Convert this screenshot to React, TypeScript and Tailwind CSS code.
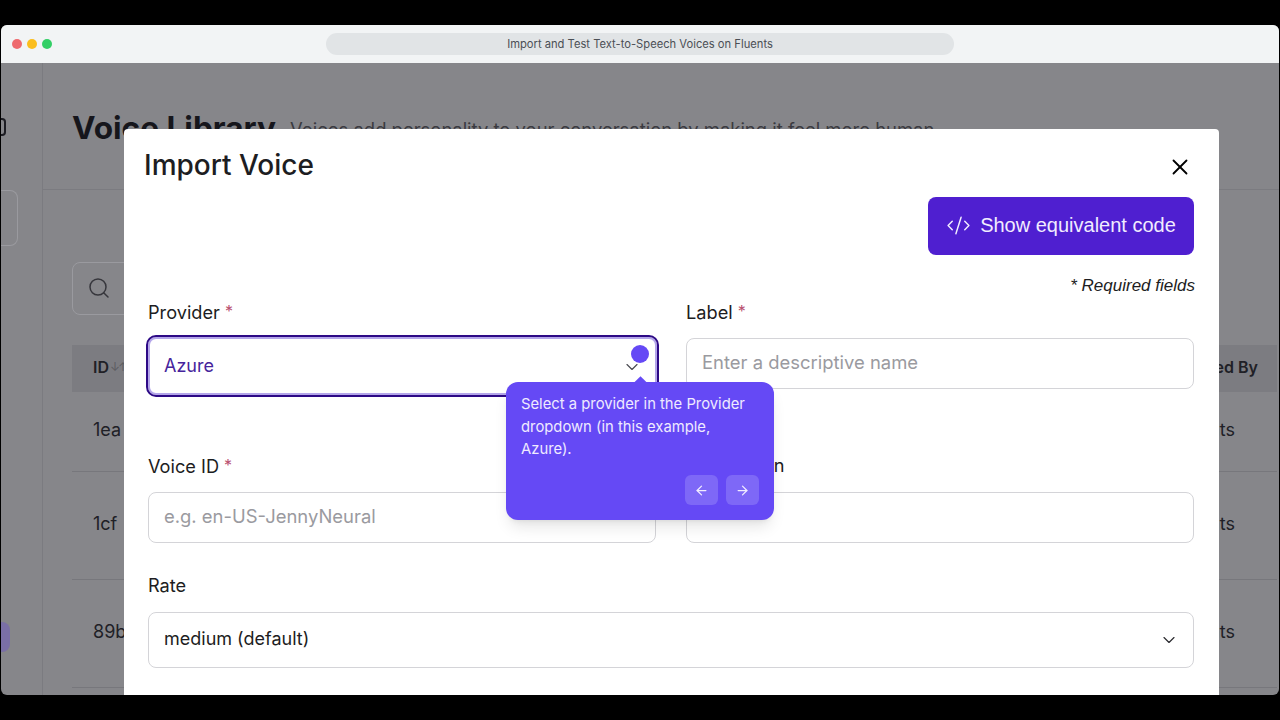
import { ArrowLeft, ArrowRight, ChevronDown, CodeXml, Search, X } from "lucide-react";

const font = "font-['Inter','Liberation_Sans',sans-serif]";

function Label({ text, required }: { text: string; required?: boolean }) {
  return (
    <div className="h-[26px] text-[18.2px] leading-[27px] text-[#1d1d22]">
      {text}
      {required && <span className="ml-[5px] align-[2px] text-[16px] text-[#b9506f]">*</span>}
    </div>
  );
}

function TextInput({ placeholder }: { placeholder?: string }) {
  return (
    <div className="mt-[14px] flex h-[51px] items-center rounded-lg border-[1.5px] border-[#d4d4d8] pb-[2px] pl-[15px] pr-[14px] text-[18.45px] text-[#9a9aa0]">
      {placeholder}
    </div>
  );
}

function Row({ id, height }: { id: string; height: string }) {
  return (
    <div className={`flex items-center justify-between border-b border-[#77777c] pb-[4px] pl-[21px] pr-[42px] text-[18px] text-[#202026] ${height}`}>
      <span>{id}</span>
      <span>Fluents</span>
    </div>
  );
}

export default function App() {
  return (
    <div className={`flex h-[720px] w-[1280px] flex-col overflow-hidden bg-black pt-[25px] ${font}`}>
      <div className="relative mx-px h-[670px] overflow-hidden rounded-md bg-[#86868a]">
        {/* browser bar */}
        <div className="relative flex h-[38px] items-center justify-center bg-[#f2f4f5]">
          <div className="absolute left-[11px] flex gap-[5px]">
            <span className="h-[10px] w-[10px] rounded-full bg-[#ee6a6e]" />
            <span className="h-[10px] w-[10px] rounded-full bg-[#fbbe1e]" />
            <span className="h-[10px] w-[10px] rounded-full bg-[#33cf66]" />
          </div>
          <div className="flex h-[22px] w-[628px] items-center justify-center rounded-full bg-[#e1e4e6] text-[11.2px] text-[#4b4f55]">
            Import and Test Text-to-Speech Voices on Fluents
          </div>
        </div>

        {/* dimmed page behind the modal */}
        <div className="flex h-[632px]">
          <aside className="relative w-[42px] shrink-0 border-r border-[#7b7b80] pt-[55px]">
            <div className="h-[18px] w-[5px] rounded-r-sm border-2 border-l-0 border-[#1c1c22]" />
            <div className="mt-[54px] h-[56px] w-[17px] rounded-r-lg border border-l-0 border-[#9a9a9f]" />
            <div className="mt-[376px] h-[30px] w-[9px] rounded-r-lg bg-[#7a6fa6]" />
          </aside>
          <main className="min-w-0 flex-1">
            <div className="flex h-[127px] items-start gap-[14px] border-b border-[#7b7b80] pl-[29px] pt-[44px]">
              <h1 className="text-[31.6px] font-bold leading-[42px] text-[#16161c]">Voice Library</h1>
              <p className="mt-[9px] text-[18.45px] text-[#3a3a40]">Voices add personality to your conversation by making it feel more human.</p>
            </div>
            <div className="pl-[29px] pr-[2px] pt-[72px]">
              <div className="flex h-[53px] w-[400px] items-center rounded-lg border border-[#9a9a9f] pb-[2px] pl-[14px]">
                <Search size={24} strokeWidth={1.5} className="text-[#36363c]" />
              </div>
              <div className="mt-[30px]">
                <div className="flex h-[47px] items-center justify-between bg-[#7c7c81] pb-[4px] pl-[21px] pr-[19px] text-[16px] font-semibold text-[#202026]">
                  <span className="flex items-center">
                    ID<span className="ml-px text-[12px] font-normal tracking-[-2px] text-[#5c5c62]">↓↑</span>
                  </span>
                  <span>Created By</span>
                </div>
                <Row id="1ea" height="h-[80px]" />
                <Row id="1cf" height="h-[108px]" />
                <Row id="89b" height="h-[108px]" />
              </div>
            </div>
          </main>
        </div>

        {/* modal */}
        <div className="absolute left-[123px] top-[104px] h-[570px] w-[1095px] rounded-t bg-white pl-[24px] pr-[25px]">
          <div className="flex items-start justify-between">
            <h2 className="-ml-[4px] mt-[17px] text-[28px] font-medium leading-[38px] text-[#1d1d22]">Import Voice</h2>
            <X size={26} strokeWidth={1.7} className="mr-px mt-[25px] text-black" />
          </div>
          <div className="mt-[13px] flex justify-end">
            <button className="flex h-[58px] w-[266px] items-center justify-center gap-[9px] rounded-lg bg-[#4f1fd0] pb-[2px] font-['Liberation_Sans',sans-serif] text-[20px] text-[#f1ecff]">
              <CodeXml size={25} strokeWidth={1.4} />
              Show equivalent code
            </button>
          </div>
          <p className="-mr-px mt-[20px] text-right font-['Liberation_Sans',sans-serif] text-[17px] italic leading-[22px] text-[#1d1d22]">* Required fields</p>

          <div className="mt-[1px] grid grid-cols-2 gap-x-[30px]">
            <div>
              <Label text="Provider" required />
              <div className="-ml-[2px] -mr-[3px] mt-[11px] flex h-[62px] items-center justify-between rounded-[10px] border-[2.5px] border-[#2d0a86] pb-[2px] pl-[16px] pr-[15px] ring-2 ring-inset ring-[#b4a6ea]">
                <span className="text-[18px] text-[#46249c]">Azure</span>
                <ChevronDown size={20} strokeWidth={1.4} className="mt-[4px] text-[#4b4b52]" />
              </div>
            </div>
            <div>
              <Label text="Label" required />
              <TextInput placeholder="Enter a descriptive name" />
            </div>
          </div>

          <div className="mt-[55px] grid grid-cols-2 gap-x-[30px]">
            <div>
              <Label text="Voice ID" required />
              <TextInput placeholder="e.g. en-US-JennyNeural" />
            </div>
            <div>
              <Label text="Description" />
              <TextInput />
            </div>
          </div>

          <div className="mt-[29px]">
            <Label text="Rate" />
            <div className="mt-[14px] flex h-[56px] items-center justify-between rounded-lg border-[1.5px] border-[#d4d4d8] pb-[4px] pl-[15px] pr-[14px] text-[18px] text-[#1d1d22]">
              medium (default)
              <ChevronDown size={20} strokeWidth={1.4} className="mt-[4px] text-[#2b2b30]" />
            </div>
          </div>
        </div>

        {/* tour tooltip */}
        <div className="absolute left-[630px] top-[320px] h-[18px] w-[18px] rounded-full bg-[#6549f5]" />
        <div className="absolute left-[505px] top-[357px] h-[138px] w-[268px] rounded-xl bg-[#6549f5] px-[15px] pt-[11px] shadow-lg">
          <div className="absolute -top-[4px] left-[130px] h-[9px] w-[9px] rotate-45 bg-[#6549f5]" />
          <p className="text-[14.8px] leading-[22.5px] text-[#efeaff]">
            Select a provider in the Provider dropdown (in this example, Azure).
          </p>
          <div className="absolute bottom-[15px] right-[15px] flex gap-[8px]">
            <button className="flex h-[30px] w-[33px] items-center justify-center rounded-md bg-[#7e68f7] text-[#f1edff]">
              <ArrowLeft size={15} />
            </button>
            <button className="flex h-[30px] w-[33px] items-center justify-center rounded-md bg-[#7e68f7] text-[#f1edff]">
              <ArrowRight size={15} />
            </button>
          </div>
        </div>
      </div>
    </div>
  );
}
